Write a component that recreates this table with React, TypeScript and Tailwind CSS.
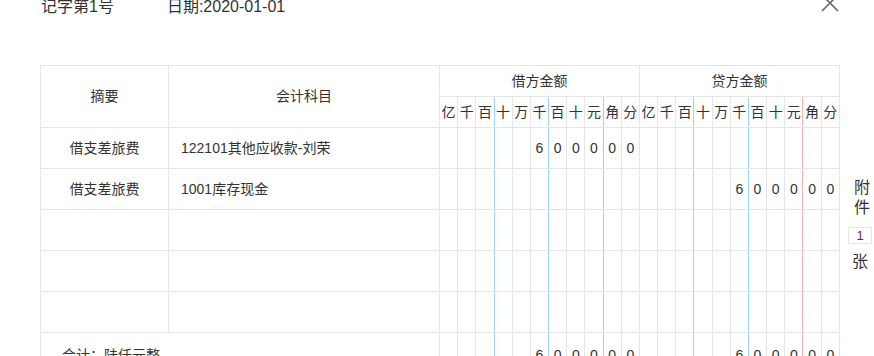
import React from "react";

const UNITS = ["亿", "千", "百", "十", "万", "千", "百", "十", "元", "角", "分"];

type Entry = { summary: string; account: string; debit: string; credit: string };

const entries: Entry[] = [
  { summary: "借支差旅费", account: "122101其他应收款-刘荣", debit: "600000", credit: "" },
  { summary: "借支差旅费", account: "1001库存现金", debit: "", credit: "600000" },
  { summary: "", account: "", debit: "", credit: "" },
  { summary: "", account: "", debit: "", credit: "" },
  { summary: "", account: "", debit: "", credit: "" },
];

// split an amount (in fen) into the 11 unit columns, right aligned
function toDigits(amount: string): string[] {
  const chars = amount.split("");
  const pad = Array(UNITS.length - chars.length).fill("");
  return [...pad, ...chars];
}

// right border colour for a unit column: blue every three places, red before 角
function lineClass(i: number): string {
  if (i === 2 || i === 5) return "border-r-[#9fd4f6]";
  if (i === 8) return "border-r-[#f2b3bb]";
  return "";
}

function DigitCells({ amount }: { amount: string }) {
  return (
    <>
      {toDigits(amount).map((d, i) => (
        <td key={i} className={`border border-[#e5e5e5] text-center p-0 ${lineClass(i)}`}>
          {d}
        </td>
      ))}
    </>
  );
}

export default function App() {
  return (
    <div
      className="w-[874px] h-[356px] overflow-hidden bg-white text-[#333] text-[14px]"
      style={{ fontFamily: '"Liberation Sans", "Noto Sans CJK SC", sans-serif' }}
    >
      <div className="flex items-center h-[14px] pl-[41px] pr-[35px] text-[16px] leading-[24px]">
        <span>记字第1号</span>
        <span className="ml-[53px]">日期:2020-01-01</span>
        <svg className="ml-auto" width="18" height="18" viewBox="0 0 18 18" style={{ marginTop: -8 }}>
          <path d="M1 1 L17 17 M17 1 L1 17" stroke="#666" strokeWidth="1.6" fill="none" />
        </svg>
      </div>

      <div className="flex mt-[51px] pl-[40px]">
        <table className="table-fixed border-collapse w-[800px] shrink-0">
          <colgroup>
            <col className="w-[128px]" />
            <col className="w-[271px]" />
            {Array.from({ length: 22 }).map((_, i) => (
              <col key={i} />
            ))}
          </colgroup>
          <thead>
            <tr className="h-[31px]">
              <th rowSpan={2} className="border border-[#e5e5e5] font-normal">摘要</th>
              <th rowSpan={2} className="border border-[#e5e5e5] font-normal">会计科目</th>
              <th colSpan={11} className="border border-[#e5e5e5] font-normal">借方金额</th>
              <th colSpan={11} className="border border-[#e5e5e5] font-normal">贷方金额</th>
            </tr>
            <tr className="h-[31px]">
              {[...UNITS, ...UNITS].map((u, i) => (
                <th
                  key={i}
                  className={`border border-[#e5e5e5] font-normal p-0 text-center ${lineClass(i % 11)}`}
                >
                  {u}
                </th>
              ))}
            </tr>
          </thead>
          <tbody>
            {entries.map((e, r) => (
              <tr key={r} className="h-[41px]">
                <td className="border border-[#e5e5e5] text-center">{e.summary}</td>
                <td className="border border-[#e5e5e5] pl-[12px]">{e.account}</td>
                <DigitCells amount={e.debit} />
                <DigitCells amount={e.credit} />
              </tr>
            ))}
            <tr className="h-[46px]">
              <td colSpan={2} className="border border-[#e5e5e5] pl-[21px]">合计：陆仟元整</td>
              <DigitCells amount="600000" />
              <DigitCells amount="600000" />
            </tr>
          </tbody>
        </table>

        <div className="ml-[8px] w-[24px] pt-[113px] flex flex-col items-center text-[16px] leading-[20px]">
          <span className="ml-[4px]">附</span>
          <span className="ml-[4px]">件</span>
          <div className="mt-[9px] w-[24px] h-[17px] border border-[#e5e5e5] flex items-center justify-center text-[13px] text-[#6d1f4f]">
            1
          </div>
          <span className="mt-[8px]">张</span>
        </div>
      </div>
    </div>
  );
}
